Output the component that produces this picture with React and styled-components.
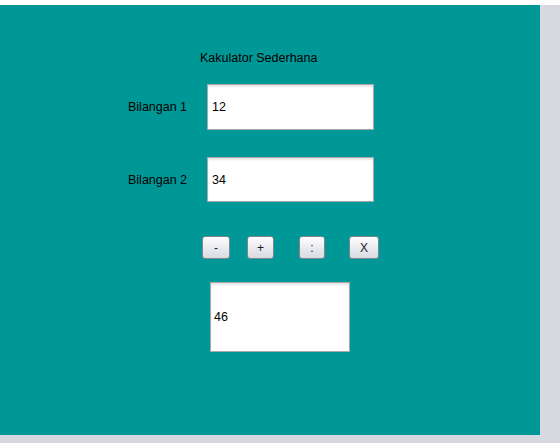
import React from "react";
import styled, { createGlobalStyle } from "styled-components";

const GlobalStyle = createGlobalStyle`
  html, body {
    margin: 0;
    padding: 0;
  }
  body {
    background: #d6d9e0;
    font-family: "Liberation Sans", Arial, sans-serif;
  }
`;

const Screen = styled.div`
  width: 560px;
  height: 443px;
  box-sizing: border-box;
  border-top: 5px solid #ffffff;
  background: #d6d9e0;
`;

const Panel = styled.div`
  width: 540px;
  height: 430px;
  background: #009797;
  display: flex;
  flex-direction: column;
  align-items: flex-start;
`;

const Title = styled.div`
  margin: 46px 0 0 200px;
  height: 14px;
  line-height: 14px;
  font-size: 12.5px;
  color: #000;
`;

const FieldRow = styled.div`
  display: flex;
  align-items: center;
  margin: ${(p) => p.$top}px 0 0 128px;
`;

const Label = styled.label`
  width: 79px;
  font-size: 12.5px;
  color: #000;
`;

const Field = styled.input`
  box-sizing: border-box;
  width: 167px;
  height: ${(p) => p.$h}px;
  padding: 0 0 0 4px;
  border: 1px solid #a8a8a8;
  background: #fff;
  box-shadow: inset 0 2px 2px rgba(0, 0, 0, 0.1);
  font-family: "Liberation Sans", Arial, sans-serif;
  font-size: 12.5px;
  color: #000;
  outline: none;
`;

const ButtonRow = styled.div`
  display: flex;
  margin: 34px 0 0 202px;
`;

const OpButton = styled.button`
  box-sizing: border-box;
  width: ${(p) => p.$w}px;
  height: 23px;
  margin-left: ${(p) => p.$gap}px;
  padding: 0;
  border: 1px solid #80868f;
  border-radius: 3px;
  background: linear-gradient(#fefefe, #e9eaee 55%, #d8dbe1);
  font-family: "Liberation Sans", Arial, sans-serif;
  font-size: 12px;
  color: #1a1a2a;
  cursor: pointer;
`;

const Result = styled.div`
  box-sizing: border-box;
  width: 140px;
  height: 70px;
  margin: 23px 0 0 210px;
  padding-left: 3px;
  display: flex;
  align-items: center;
  border: 1px solid #a8a8a8;
  background: #fff;
  box-shadow: inset 0 2px 2px rgba(0, 0, 0, 0.1);
  font-size: 12.5px;
  color: #000;
`;

const ops = [
  { sign: "-", w: 28, gap: 0 },
  { sign: "+", w: 27, gap: 17 },
  { sign: ":", w: 26, gap: 25 },
  { sign: "X", w: 30, gap: 24 },
];

export default function App() {
  return (
    <>
      <GlobalStyle />
      <Screen>
        <Panel>
          <Title>Kakulator Sederhana</Title>
          <FieldRow $top={19}>
            <Label>Bilangan 1</Label>
            <Field $h={46} value="12" readOnly />
          </FieldRow>
          <FieldRow $top={27}>
            <Label>Bilangan 2</Label>
            <Field $h={45} value="34" readOnly />
          </FieldRow>
          <ButtonRow>
            {ops.map((o) => (
              <OpButton key={o.sign} $w={o.w} $gap={o.gap}>
                {o.sign}
              </OpButton>
            ))}
          </ButtonRow>
          <Result>46</Result>
        </Panel>
      </Screen>
    </>
  );
}
